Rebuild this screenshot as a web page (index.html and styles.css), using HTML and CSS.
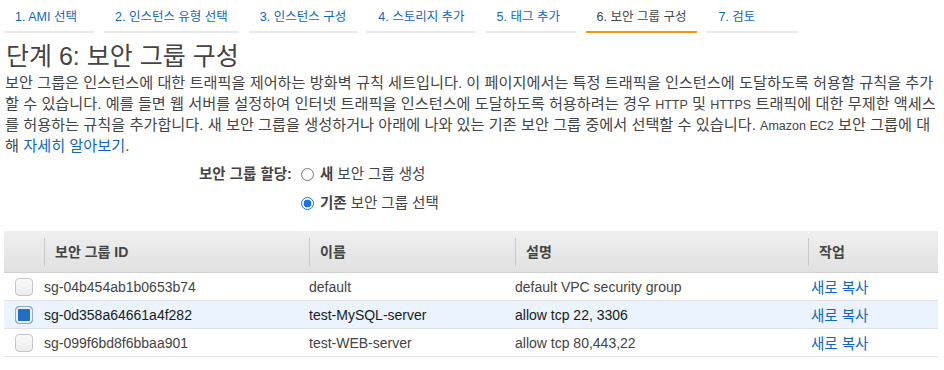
FILE: index.html
```html
<!DOCTYPE html>
<html lang="ko">
<head>
<meta charset="utf-8">
<link rel="stylesheet" href="styles.css">
</head>
<body>
<nav class="tabs">
  <a class="tab">1. AMI 선택</a>
  <a class="tab">2. 인스턴스 유형 선택</a>
  <a class="tab">3. 인스턴스 구성</a>
  <a class="tab">4. 스토리지 추가</a>
  <a class="tab">5. 태그 추가</a>
  <a class="tab active">6. 보안 그룹 구성</a>
  <a class="tab">7. 검토</a>
</nav>
<main class="content">
  <h1 class="title">단계 6: 보안 그룹 구성</h1>
  <p class="desc">보안 그룹은 인스턴스에 대한 트래픽을 제어하는 방화벽 규칙 세트입니다. 이 페이지에서는 특정 트래픽을 인스턴스에 도달하도록 허용할 규칙을 추가할 수 있습니다. 예를 들면 웹 서버를 설정하여 인터넷 트래픽을 인스턴스에 도달하도록 허용하려는 경우 <span class="en">HTTP</span> 및 <span class="en">HTTPS</span> 트래픽에 대한 무제한 액세스를 허용하는 규칙을 추가합니다. 새 보안 그룹을 생성하거나 아래에 나와 있는 기존 보안 그룹 중에서 선택할 수 있습니다. <span class="en">Amazon EC2</span> 보안 그룹에 대해 <a class="link">자세히 알아보기</a>.</p>
  <div class="assign">
    <div class="assign-label">보안 그룹 할당:</div>
    <div class="assign-options">
      <label class="opt"><span class="radio"></span><b>새</b>&nbsp;보안 그룹 생성</label>
      <label class="opt"><span class="radio on"></span><b>기존</b>&nbsp;보안 그룹 선택</label>
    </div>
  </div>
  <table class="grid">
    <thead>
      <tr>
        <th class="c-check"></th>
        <th class="c-id"><span class="sep">보안 그룹 ID</span></th>
        <th class="c-name"><span class="sep">이름</span></th>
        <th class="c-desc"><span class="sep">설명</span></th>
        <th class="c-act"><span class="sep">작업</span></th>
      </tr>
    </thead>
    <tbody>
      <tr>
        <td class="c-check"><span class="cb"></span></td>
        <td>sg-04b454ab1b0653b74</td>
        <td>default</td>
        <td>default VPC security group</td>
        <td class="act"><a class="link">새로 복사</a></td>
      </tr>
      <tr class="selected">
        <td class="c-check"><span class="cb on"></span></td>
        <td>sg-0d358a64661a4f282</td>
        <td>test-MySQL-server</td>
        <td>allow tcp 22, 3306</td>
        <td class="act"><a class="link">새로 복사</a></td>
      </tr>
      <tr>
        <td class="c-check"><span class="cb"></span></td>
        <td>sg-099f6bd8f6bbaa901</td>
        <td>test-WEB-server</td>
        <td>allow tcp 80,443,22</td>
        <td class="act"><a class="link">새로 복사</a></td>
      </tr>
    </tbody>
  </table>
</main>
</body>
</html>
```
FILE: styles.css
```css
html, body {
  margin: 0;
  padding: 0;
  background: #fff;
}
body {
  font-family: "Liberation Sans", "Noto Sans CJK KR", sans-serif;
  color: #444;
  font-size: 14px;
}
.tabs {
  display: flex;
  gap: 10px;
  padding-left: 4px;
  height: 33px;
}
.tab {
  display: block;
  box-sizing: border-box;
  min-width: 90px;
  height: 33px;
  padding: 9px 11px 0 11px;
  font-size: 12.5px;
  line-height: 16px;
  color: #1166bb;
  border-bottom: 2px solid #e9e9e9;
  white-space: nowrap;
}
.tab.active {
  color: #444;
  border-bottom-color: #f7941d;
}
.content {
  padding: 0 5px 0 5px;
}
.title {
  margin: 7px 0 0 1px;
  font-size: 25px;
  font-weight: normal;
  line-height: 32px;
  color: #444;
}
.desc {
  margin: 0;
  font-size: 15.2px;
  line-height: 21px;
  color: #444;
}
.en {
  font-size: 12.5px;
  line-height: 1;
}
.link {
  color: #1166bb;
  text-decoration: none;
}
.assign {
  display: flex;
  margin-top: 7px;
  padding-left: 194px;
  gap: 9px;
  font-size: 14.5px;
}
.assign-label {
  font-weight: bold;
  line-height: 22px;
}
.assign-options {
  display: flex;
  flex-direction: column;
  gap: 7px;
}
.opt {
  display: flex;
  align-items: center;
  line-height: 22px;
}
.opt b {
  font-weight: bold;
}
.radio {
  width: 11px;
  height: 11px;
  border: 1px solid #767676;
  border-radius: 50%;
  margin-right: 6px;
  box-sizing: content-box;
  background: #fff;
}
.radio.on {
  border-color: #1a73e8;
  background: radial-gradient(circle, #1a73e8 0 3.6px, #fff 4.2px);
}
.grid {
  margin-top: 17px;
  width: 934px;
  margin-left: -1px;
  border-collapse: collapse;
  table-layout: fixed;
}
.grid th {
  height: 41px;
  padding: 0;
  text-align: left;
  font-weight: bold;
  color: #444;
  background: linear-gradient(#efefef, #e1e1e1);
  border-bottom: 1px solid #cfcfcf;
}
.grid .sep {
  display: block;
  border-left: 1px solid #c8c8c8;
  padding-left: 10px;
  line-height: 28px;
}
.grid td {
  height: 27px;
  padding: 0;
  border-bottom: 1px solid #e2e2e2;
  white-space: nowrap;
}
.grid tr.selected td {
  background: #eaf3fe;
  color: #1a1a1a;
}
.grid td.act {
  padding-left: 3px;
  font-size: 14.5px;
}
.c-check { width: 40px; }
.c-id { width: 265px; }
.c-name { width: 206px; }
.c-desc { width: 293px; }
.grid td.c-check {
  padding-left: 11px;
}
.cb {
  display: block;
  box-sizing: border-box;
  width: 18px;
  height: 18px;
  border: 1px solid #c6c6c6;
  border-radius: 4px;
  background: linear-gradient(#fafafa, #ececec);
}
.cb.on {
  border-color: #9ab;
  background: #1f6fc5;
  box-shadow: inset 0 0 0 2px #e8eef6;
}
```
